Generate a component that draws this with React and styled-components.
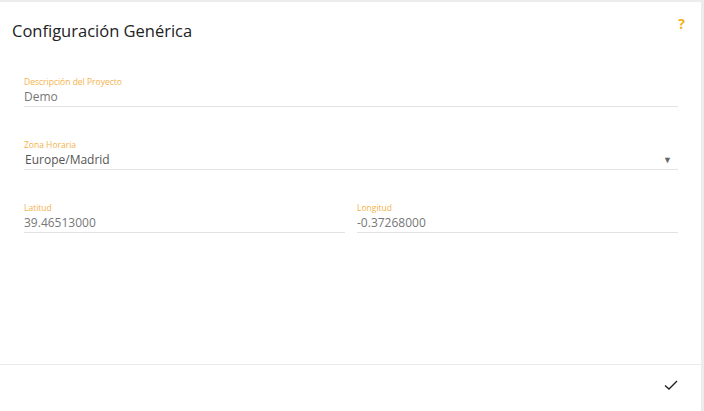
import React from 'react'
import styled, { createGlobalStyle } from 'styled-components'

const Global = createGlobalStyle`
  html, body { margin: 0; padding: 0; background: #ececec; }
  body { font-family: "Open Sans", "Liberation Sans", sans-serif; }
`

const Page = styled.div`
  width: 704px;
  height: 411px;
  padding: 2px 3px 0 0;
  box-sizing: border-box;
  background: #ececec;
`

const Card = styled.div`
  background: #fff;
  height: 409px;
  display: flex;
  flex-direction: column;
`

const Header = styled.div`
  display: flex;
  justify-content: space-between;
  padding: 17px 16px 0 12px;
  height: 44px;
  box-sizing: border-box;
`

const Title = styled.h1`
  margin: 0;
  font-size: 16.5px;
  font-weight: 400;
  color: #222;
`

const Help = styled.span`
  color: #f2b01e;
  font-size: 14px;
  font-weight: 700;
  margin-top: -5px;
`

const Body = styled.div`
  flex: 1;
  padding: 30px 23px 0 24px;
  display: flex;
  flex-direction: column;
  gap: 32px;
`

const Row = styled.div`
  display: grid;
  grid-template-columns: 1fr 1fr;
  gap: 12px;
`

const Field = styled.div`
  display: flex;
  flex-direction: column;
  border-bottom: 1px solid #e2e2e2;
  padding-bottom: 1px;
`

const Label = styled.label`
  font-size: 8.5px;
  color: #f5b24a;
  line-height: 12px;
`

const Value = styled.div`
  font-size: 12px;
  color: ${p => (p.dark ? '#555' : '#777')};
  line-height: 17px;
  display: flex;
  justify-content: space-between;
  align-items: center;
  padding-left: ${p => (p.indent ? '1px' : '0')};
`

const Caret = styled.span`
  font-size: 9px;
  color: #666;
  margin-right: 6px;
`

const Footer = styled.div`
  border-top: 1px solid #ebebeb;
  height: 40px;
  display: flex;
  justify-content: flex-end;
  align-items: center;
  padding-right: 23px;
  margin-bottom: 6px;
`

export default function App() {
  return (
    <Page>
      <Global />
      <Card>
        <Header>
          <Title>Configuración Genérica</Title>
          <Help>?</Help>
        </Header>
        <Body>
          <Field>
            <Label>Descripción del Proyecto</Label>
            <Value>Demo</Value>
          </Field>
          <Field>
            <Label>Zona Horaria</Label>
            <Value dark indent>Europe/Madrid<Caret>▼</Caret></Value>
          </Field>
          <Row>
            <Field>
              <Label>Latitud</Label>
              <Value>39.46513000</Value>
            </Field>
            <Field>
              <Label>Longitud</Label>
              <Value>-0.37268000</Value>
            </Field>
          </Row>
        </Body>
        <Footer>
          <svg width="14" height="12" viewBox="0 0 14 12">
            <path d="M1 6.5 L5 10 L13 2" fill="none" stroke="#222" strokeWidth="1.4" />
          </svg>
        </Footer>
      </Card>
    </Page>
  )
}
